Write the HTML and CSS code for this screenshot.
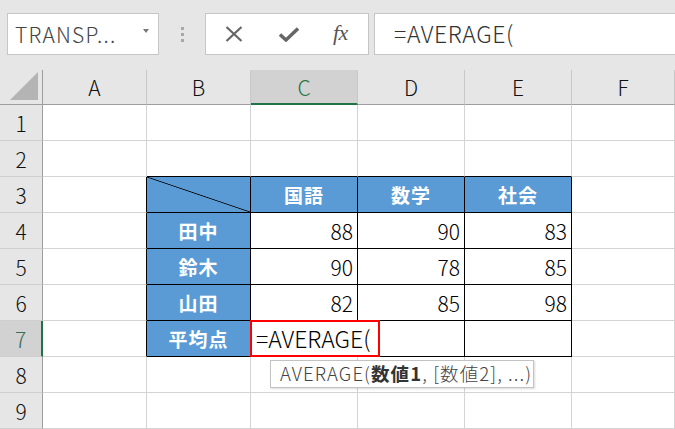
FILE: index.html
```html
<!DOCTYPE html>
<html lang="ja">
<head>
<meta charset="utf-8">
<title>AVERAGE</title>
<link rel="stylesheet" href="styles.css">
</head>
<body>
<div class="app">
  <div class="toolbar">
    <div class="namebox"><span class="nb-text">TRANSP...</span><span class="caret"></span></div>
    <div class="grip"><i></i><i></i><i></i></div>
    <div class="fbtns">
      <svg class="ico" width="18" height="16" viewBox="0 0 18 16"><path d="M1.5 1 L16.5 15 M16.5 1 L1.5 15" stroke="#666" stroke-width="2.2" fill="none"/></svg>
      <svg class="ico" width="20" height="16" viewBox="0 0 20 16"><path d="M1 8.5 L7 14 L19 2.5" stroke="#666" stroke-width="3.4" fill="none" stroke-linejoin="miter"/></svg>
      <span class="fx">fx</span>
    </div>
    <div class="finput">=AVERAGE(</div>
  </div>
  <div class="sheet">
    <div class="corner"><svg width="30" height="30" viewBox="0 0 30 30"><polygon points="28,0 28,28 0,28" fill="#b4b4b4"/></svg></div>
    <div class="ch">A</div><div class="ch">B</div><div class="ch sel">C</div><div class="ch">D</div><div class="ch">E</div><div class="ch">F</div>

    <div class="rh">1</div><div class="c"></div><div class="c"></div><div class="c"></div><div class="c"></div><div class="c"></div><div class="c"></div>
    <div class="rh">2</div><div class="c"></div><div class="c tt"></div><div class="c tt"></div><div class="c tt"></div><div class="c tt"></div><div class="c"></div>

    <div class="rh">3</div><div class="c tl"></div><div class="c t hd diag"></div><div class="c t hd">国語</div><div class="c t hd">数学</div><div class="c t hd">社会</div><div class="c"></div>
    <div class="rh">4</div><div class="c tl"></div><div class="c t hd">田中</div><div class="c t num">88</div><div class="c t num">90</div><div class="c t num">83</div><div class="c"></div>
    <div class="rh">5</div><div class="c tl"></div><div class="c t hd">鈴木</div><div class="c t num">90</div><div class="c t num">78</div><div class="c t num">85</div><div class="c"></div>
    <div class="rh">6</div><div class="c tl"></div><div class="c t hd">山田</div><div class="c t num">82</div><div class="c t num">85</div><div class="c t num">98</div><div class="c"></div>
    <div class="rh sel">7</div><div class="c tl"></div><div class="c t hd">平均点</div><div class="c t active"><div class="editbox">=AVERAGE(</div></div><div class="c t"></div><div class="c t"></div><div class="c"></div>

    <div class="rh">8</div><div class="c"></div><div class="c"></div><div class="c"></div><div class="c"></div><div class="c"></div><div class="c"></div>
    <div class="rh">9</div><div class="c"></div><div class="c"></div><div class="c"></div><div class="c"></div><div class="c"></div><div class="c"></div>

    <div class="tooltip">AVERAGE(<b>数値1</b>, [数値2], ...)</div>
  </div>
</div>
</body>
</html>
```
FILE: styles.css
```css
* { box-sizing: border-box; }
html, body { margin: 0; padding: 0; }
body {
  width: 675px;
  height: 429px;
  overflow: hidden;
  background: #e6e6e6;
  font-family: "Noto Sans CJK JP", "Noto Sans", sans-serif;
  font-weight: 300;
  color: #222;
}
.app { width: 675px; height: 429px; display: flex; flex-direction: column; }

.toolbar {
  height: 70px;
  flex: none;
  display: flex;
  align-items: flex-start;
  padding: 13px 0 0 7px;
}
.namebox {
  width: 152px;
  height: 42px;
  background: #fff;
  border: 1px solid #c6c6c6;
  display: flex;
  align-items: center;
  justify-content: space-between;
  padding: 0 9px 0 7px;
  color: #444;
}
.nb-text { font-size: 21px; line-height: 1; letter-spacing: 1.2px; }
.caret {
  width: 0; height: 0;
  border-left: 3.5px solid transparent;
  border-right: 3.5px solid transparent;
  border-top: 4px solid #777;
  margin-top: -6px;
}
.grip {
  width: 46px;
  height: 42px;
  display: flex;
  flex-direction: column;
  align-items: center;
  justify-content: center;
  gap: 3px;
}
.grip i { display: block; width: 3px; height: 3px; background: #a8a8a8; }
.fbtns {
  width: 164px;
  height: 42px;
  background: #fff;
  border: 1px solid #c6c6c6;
  display: flex;
  align-items: center;
  padding-left: 19px;
}
.fbtns .ico:nth-child(1) { margin-right: 36px; }
.fbtns .ico:nth-child(2) { margin-right: 34px; }
.fx {
  font-family: "Liberation Serif", "DejaVu Serif", serif;
  font-style: italic;
  font-weight: normal;
  font-size: 22px;
  color: #555;
  letter-spacing: -0.5px;
  margin-top: -3px;
}
.finput {
  flex: 1;
  height: 42px;
  margin-left: 5px;
  background: #fff;
  border: 1px solid #c6c6c6;
  border-right: none;
  padding-left: 19px;
  font-size: 23px;
  letter-spacing: 0.6px;
  line-height: 38px;
  color: #333;
}

.sheet {
  position: relative;
  flex: 1;
  display: grid;
  grid-template-columns: 43px 104px 104px 107px 107px 107px 1fr;
  grid-template-rows: 35px repeat(9, 36px);
  background: #fff;
}
.corner {
  background: #e6e6e6;
  border-right: 1px solid #9e9e9e;
  border-bottom: 1px solid #9e9e9e;
  display: flex;
  align-items: flex-end;
  justify-content: flex-end;
  padding: 0 2px 2px 0;
}
.corner svg { display: block; }
.ch {
  background: #e6e6e6;
  border-right: 1px solid #c8c8c8;
  border-bottom: 1px solid #9e9e9e;
  display: flex;
  align-items: center;
  justify-content: center;
  font-size: 21px;
  color: #111;
}
.ch.sel {
  background: #d2d2d2;
  border-bottom: 2px solid #217346;
  color: #217346;
  padding-top: 1px;
}
.rh {
  background: #e6e6e6;
  border-right: 1px solid #9e9e9e;
  border-bottom: 1px solid #cfcfcf;
  display: flex;
  align-items: center;
  justify-content: center;
  font-size: 21px;
  color: #111;
}
.rh.sel {
  background: #d2d2d2;
  border-right: 2px solid #217346;
  color: #3a6d55;
}
.c {
  background: #fff;
  border-right: 1px solid #d4d4d4;
  border-bottom: 1px solid #d4d4d4;
  display: flex;
  align-items: center;
}
.c.tt { border-bottom-color: #000; }
.c.tl { border-right-color: #000; }
.c.t { border-right-color: #000; border-bottom-color: #000; }
.c.hd {
  background-color: #5b9bd5;
  color: #fff;
  font-weight: bold;
  font-size: 19px;
  justify-content: center;
  letter-spacing: 1px;
}
.c.diag {
  background-image: linear-gradient(to bottom left, transparent calc(50% - 0.8px), #000 50%, transparent calc(50% + 0.8px));
}
.c.num {
  justify-content: flex-end;
  padding-right: 4px;
  font-size: 21px;
  color: #000;
}
.c.active { position: relative; z-index: 2; }
.editbox {
  position: absolute;
  left: -1px;
  top: -1px;
  width: 130px;
  height: 37px;
  border: 2px solid #f00;
  background: #fff;
  padding-left: 4px;
  font-size: 23px;
  line-height: 32px;
  color: #000;
  white-space: nowrap;
}
.tooltip {
  position: absolute;
  left: 270px;
  top: 290px;
  width: 264px;
  height: 28px;
  background: #fff;
  border: 1px solid #c2c2c2;
  box-shadow: 1px 1px 2px rgba(0,0,0,0.15);
  padding-left: 9px;
  font-size: 18.5px;
  letter-spacing: 1.1px;
  line-height: 25px;
  color: #444;
  white-space: nowrap;
  z-index: 3;
}
.tooltip b { color: #333; font-weight: bold; }
```
